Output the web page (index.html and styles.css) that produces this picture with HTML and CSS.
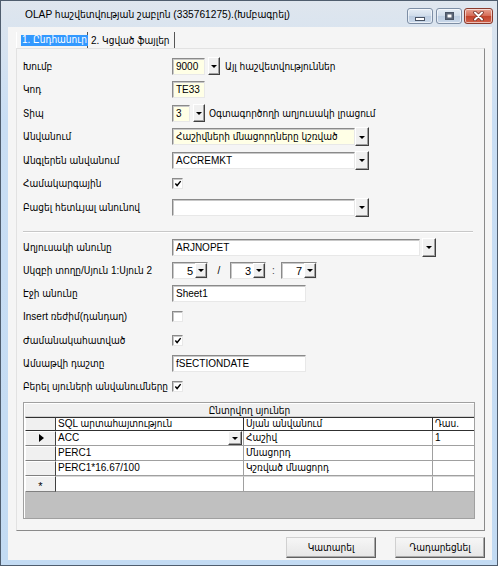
FILE: index.html
```html
<!DOCTYPE html>
<html>
<head>
<meta charset="utf-8">
<link rel="stylesheet" href="styles.css">
</head>
<body>
<div class="window">
  <div class="titlebar">
    <span class="title">OLAP հաշվետվության շաբլոն (335761275).(Խմբագրել)</span>
    <div class="wbtns">
      <span class="wb wmin"><span class="minbar"></span></span>
      <span class="wb wmax"><span class="maxbox"></span></span>
      <span class="wb wclose"><svg width="13" height="10" viewBox="0 0 13 10"><path d="M3 1.5 L10 8.5 M10 1.5 L3 8.5" stroke="#6b2a20" stroke-width="3.4" stroke-linecap="round"/><path d="M3 1.5 L10 8.5 M10 1.5 L3 8.5" stroke="#ffffff" stroke-width="2" stroke-linecap="round"/></svg></span>
    </div>
  </div>
  <div class="frame">
    <div class="client">
      <div class="tabs">
        <span class="tab tab1"><span class="sel">1. Ընդհանուր</span></span>
        <span class="tab tab2">2. Կցված ֆայլեր</span>
      </div>
      <div class="panel">
        <div class="form form1">
          <div class="row"><span class="label">Խումբ</span><span class="inp yel w33">9000</span><span class="dd sep4"></span><span class="after a5">Այլ հաշվետվություններ</span></div>
          <div class="row"><span class="label">Կոդ</span><span class="inp yel w33">TE33</span></div>
          <div class="row"><span class="label">Տիպ</span><span class="inp yel w18">3</span><span class="dd sep3"></span><span class="after a4">Օգտագործողի աղյուսակի լրացում</span></div>
          <div class="row"><span class="label">Անվանում</span><span class="inp yel w183">Հաշիվների մնացորդները կշռված</span><span class="dd tall"></span></div>
          <div class="row"><span class="label">Անգլերեն անվանում</span><span class="inp w183">ACCREMKT</span><span class="dd tall"></span></div>
          <div class="row"><span class="label">Համակարգային</span><span class="chk on"><svg width="9" height="9" viewBox="0 0 9 9"><path d="M1.5 4.5 L3.5 6.8 L7.5 1.8" stroke="#000" stroke-width="1.6" fill="none"/></svg></span></div>
          <div class="row"><span class="label">Բացել հետևյալ անունով</span><span class="inp w183"></span><span class="dd tall"></span></div>
        </div>
        <div class="hsep"></div>
        <div class="form form2">
          <div class="row"><span class="label">Աղյուսակի անունը</span><span class="inp w248">ARJNOPET</span><span class="dd tall sep2"></span></div>
          <div class="row"><span class="label">Սկզբի տողը/Սյուն 1:Սյուն 2</span>
            <span class="combo"><span class="val">5</span><span class="dd small"></span></span>
            <span class="slash">/</span>
            <span class="combo"><span class="val">3</span><span class="dd small"></span></span>
            <span class="colon">:</span>
            <span class="combo c3"><span class="val">7</span><span class="dd small"></span></span>
          </div>
          <div class="row"><span class="label">Էջի անունը</span><span class="inp w134">Sheet1</span></div>
          <div class="row"><span class="label">Insert ռեժիմ(դանդաղ)</span><span class="chk"></span></div>
          <div class="row"><span class="label">Ժամանակահատված</span><span class="chk on"><svg width="9" height="9" viewBox="0 0 9 9"><path d="M1.5 4.5 L3.5 6.8 L7.5 1.8" stroke="#000" stroke-width="1.6" fill="none"/></svg></span></div>
          <div class="row"><span class="label">Ամսաթվի դաշտը</span><span class="inp w134">fSECTIONDATE</span></div>
          <div class="row"><span class="label">Բերել սյուների անվանումները</span><span class="chk on"><svg width="9" height="9" viewBox="0 0 9 9"><path d="M1.5 4.5 L3.5 6.8 L7.5 1.8" stroke="#000" stroke-width="1.6" fill="none"/></svg></span></div>
        </div>
        <div class="grid">
          <div class="caption">Ընտրվող սյուներ</div>
          <div class="table">
            <div class="ind hdr"></div><div class="hc">SQL արտահայտություն</div><div class="hc">Սյան անվանում</div><div class="hc last">Դաս.</div>
            <div class="ind"><span class="ptr"></span></div><div class="dc acc"><span>ACC</span><span class="dd cell"></span></div><div class="dc">Հաշիվ</div><div class="dc last">1</div>
            <div class="ind"></div><div class="dc">PERC1</div><div class="dc">Մնացորդ</div><div class="dc last"></div>
            <div class="ind"></div><div class="dc">PERC1*16.67/100</div><div class="dc">Կշռված մնացորդ</div><div class="dc last"></div>
            <div class="ind star">*</div><div class="dc newr"></div><div class="dc newr"></div><div class="dc last newr"></div>
          </div>
          <div class="empty"></div>
        </div>
      </div>
      <div class="buttons">
        <span class="btn">Կատարել</span>
        <span class="btn">Դադարեցնել</span>
      </div>
    </div>
  </div>
</div>
</body>
</html>
```

FILE: styles.css
```css
* { box-sizing: border-box; }
html, body { margin: 0; padding: 0; }
body {
  width: 498px; height: 566px; overflow: hidden;
  font-family: "Liberation Sans", "DejaVu Sans Condensed", "DejaVu Sans", sans-serif;
  font-size: 10px; color: #000; background: #c6ddf3;
}
.window {
  width: 498px; height: 566px;
  display: flex; flex-direction: column;
  border: 1px solid #4f5d6e;
  background: linear-gradient(#dfe6ee, #c9def4 120px, #c3dbf3);
}
.titlebar {
  height: 26px; flex: none;
  display: flex; align-items: flex-start;
  padding-left: 24px;
}
.title { font-size: 10.2px; margin-top: 8px; color: #000; white-space: nowrap; }
.wbtns { margin-left: auto; display: flex; margin-right: 4px; margin-top: 7px; }
.wb {
  height: 16px; border: 1px solid #7d8ea5; border-radius: 3px;
  background: linear-gradient(#e5edf6, #cfdcea 50%, #bccde1 51%, #c9d8ea);
  display: flex; align-items: center; justify-content: center;
  box-shadow: inset 0 0 0 1px rgba(255,255,255,0.6);
}
.wmin { width: 26px; margin-right: 3px; }
.wmax { width: 26px; margin-right: 2px; }
.wclose {
  width: 29px; border-color: #8a3a2c;
  background: linear-gradient(#e8a393, #d56b55 50%, #c2432b 51%, #d0604a);
}
.minbar { width: 10px; height: 4px; background: #fff; border: 1px solid #4a5566; margin-top: 5px; }
.maxbox { width: 9px; height: 8px; border: 1px solid #4a5566; background: #fff; box-shadow: inset 0 0 0 1.5px #5a6577; }
.frame { flex: 1; padding: 0 5px 5px 7px; }
.client {
  height: 100%; background: #f5f5f5;
  padding: 5px 7px 0 8px;
  display: flex; flex-direction: column;
}
.tabs { height: 16px; display: flex; flex: none; }
.tab { height: 16px; display: flex; align-items: center; white-space: nowrap; }
.tab1 { width: 72px; padding-left: 4px; border-left: 1px solid #fff; border-right: 1px solid #555; }
.tab2 { width: 87px; padding-left: 3px; border-right: 1px solid #555; }
.sel { background: #3399ff; color: #fff; padding: 0 1px; line-height: 10px; height: 11px; }
.panel {
  height: 483px; flex: none;
  border: 1px solid; border-color: #e2e2e2 #8a8a8a #8a8a8a #e2e2e2;
  padding: 8px 0 0 6px;
}
.form { display: flex; flex-direction: column; }
.form1 { gap: 5.5px; }
.form2 { gap: 5.33px; }
.row { display: flex; align-items: center; height: 18px; white-space: nowrap; }
.label { width: 149px; flex: none; }
.inp {
  height: 17px; flex: none;
  border: 1px solid; border-color: #8a8a8a #e8e8e8 #e8e8e8 #8a8a8a;
  box-shadow: inset 1px 1px 0 #c8c8c8;
  background: #fff; padding: 2px 0 0 3px; line-height: 12px; overflow: hidden;
}
.yel { background: #ffffe6; }
.w33 { width: 33px; }
.w18 { width: 18px; }
.w183 { width: 183px; }
.w248 { width: 248px; }
.w134 { width: 134px; }
.dd {
  width: 12px; height: 18px; flex: none; position: relative;
  background: #f0f0f0;
  border: 1px solid; border-color: #fff #404040 #404040 #fff;
  box-shadow: inset -1px -1px 0 #a0a0a0;
}
.dd::after {
  content: ""; position: absolute; left: 50%; top: 50%;
  margin-left: -3px; margin-top: -1px;
  border-left: 3px solid transparent; border-right: 3px solid transparent; border-top: 3px solid #000;
}
.dd.tall { width: 14px; height: 19px; }
.sep4 { margin-left: 3px; }
.sep3 { margin-left: 3px; }
.sep2 { margin-left: 2px; }
.after.a5 { margin-left: 5px; }
.after.a4 { margin-left: 4px; }
.chk {
  width: 11px; height: 11px; flex: none; background: #fff;
  border: 1px solid; border-color: #8a8a8a #e8e8e8 #e8e8e8 #8a8a8a;
  box-shadow: inset 1px 1px 0 #c8c8c8;
  display: flex; align-items: center; justify-content: center;
}
.chk svg { display: block; margin: 0 0 0 1px; }
.hsep { height: 2px; width: 450px; border-top: 1px solid #c8c8c8; border-bottom: 1px solid #fff; margin: 15px 0 5px 0; }
.combo {
  width: 36px; height: 17px; flex: none; display: flex; align-items: stretch;
  border: 1px solid; border-color: #8a8a8a #e8e8e8 #e8e8e8 #8a8a8a;
  box-shadow: inset 1px 1px 0 #c8c8c8; background: #fff;
}
.combo .val { flex: 1; text-align: right; padding: 2px 2px 0 0; font-size: 11px; line-height: 12px; }
.combo .dd.small { width: 12px; height: 15px; }
.slash { width: 22px; text-align: center; }
.colon { width: 15px; text-align: center; color: #444; }
.grid {
  margin-top: 6px; width: 452px; height: 117px;
  border: 1px solid #a0a0a0; box-shadow: inset 1px 1px 0 #fff;
  background: #c0c0c0; display: flex; flex-direction: column;
  padding: 1px 0 0 1px;
}
.caption { height: 13px; background: #f0f0f0; text-align: center; line-height: 13px; border-bottom: 1px solid #d0d0d0; }
.table {
  display: grid; grid-template-columns: 31px 188px 189px 1fr;
  grid-template-rows: 14px 15px 15px 15px 16px;
  background: #fff;
}
.hc {
  background: #fff; border-top: 1px solid #303030; border-bottom: 1px solid #303030; border-right: 1px solid #303030;
  padding-left: 2px; line-height: 12px; white-space: nowrap;
}
.ind {
  background: #f0f0f0;
  border: 1px solid; border-color: #fff #404040 #808080 #fff;
  display: flex; align-items: center; justify-content: center;
}
.ind.hdr { border-top-color: #303030; border-bottom-color: #303030; }
.ptr { width: 0; height: 0; border-top: 4px solid transparent; border-bottom: 4px solid transparent; border-left: 5px solid #000; margin-left: 2px; }
.star { font-size: 11px; line-height: 10px; padding-top: 4px; }
.dc {
  border-right: 1px solid #a0a0a0; border-bottom: 1px solid #a0a0a0;
  padding-left: 2px; line-height: 14px; white-space: nowrap; overflow: hidden;
}
.dc.last, .hc.last { border-right: none; }
.dc.acc { display: flex; justify-content: space-between; align-items: flex-start; padding-right: 1px; }
.dd.cell { width: 14px; height: 14px; margin-top: 0; }
.newr { border-top: 1px solid #d8d8d8; }
.empty { flex: 1; background: #c0c0c0; }
.buttons { display: flex; justify-content: flex-end; gap: 19px; margin-top: 6px; }
.btn {
  width: 90px; height: 21px; display: flex; align-items: center; justify-content: center;
  background: linear-gradient(#f6f6f6, #e6e6e6);
  border: 1px solid; border-color: #d0d0d0 #606060 #606060 #d0d0d0;
  box-shadow: inset -1px -1px 0 #a8a8a8;
}
```
